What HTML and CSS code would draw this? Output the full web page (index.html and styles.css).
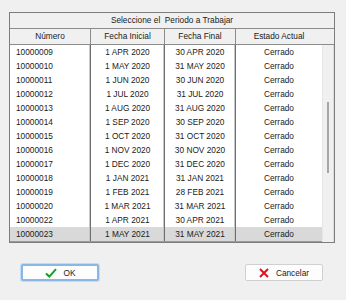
FILE: index.html
```html
<!DOCTYPE html>
<html>
<head>
<meta charset="utf-8">
<link rel="stylesheet" href="styles.css">
</head>
<body>
<div class="grid">
  <div class="title">Seleccione el&nbsp; Periodo a Trabajar</div>
  <div class="head">
    <div class="hc">Número</div>
    <div class="hc">Fecha Inicial</div>
    <div class="hc">Fecha Final</div>
    <div class="hc last">Estado Actual</div>
    <div class="hs"></div>
  </div>
  <div class="body">
    <div class="rows">
      <div class="row"><div class="c num">10000009</div><div class="c">1 APR 2020</div><div class="c">30 APR 2020</div><div class="c">Cerrado</div></div>
      <div class="row"><div class="c num">10000010</div><div class="c">1 MAY 2020</div><div class="c">31 MAY 2020</div><div class="c">Cerrado</div></div>
      <div class="row"><div class="c num">10000011</div><div class="c">1 JUN 2020</div><div class="c">30 JUN 2020</div><div class="c">Cerrado</div></div>
      <div class="row"><div class="c num">10000012</div><div class="c">1 JUL 2020</div><div class="c">31 JUL 2020</div><div class="c">Cerrado</div></div>
      <div class="row"><div class="c num">10000013</div><div class="c">1 AUG 2020</div><div class="c">31 AUG 2020</div><div class="c">Cerrado</div></div>
      <div class="row"><div class="c num">10000014</div><div class="c">1 SEP 2020</div><div class="c">30 SEP 2020</div><div class="c">Cerrado</div></div>
      <div class="row"><div class="c num">10000015</div><div class="c">1 OCT 2020</div><div class="c">31 OCT 2020</div><div class="c">Cerrado</div></div>
      <div class="row"><div class="c num">10000016</div><div class="c">1 NOV 2020</div><div class="c">30 NOV 2020</div><div class="c">Cerrado</div></div>
      <div class="row"><div class="c num">10000017</div><div class="c">1 DEC 2020</div><div class="c">31 DEC 2020</div><div class="c">Cerrado</div></div>
      <div class="row"><div class="c num">10000018</div><div class="c">1 JAN 2021</div><div class="c">31 JAN 2021</div><div class="c">Cerrado</div></div>
      <div class="row"><div class="c num">10000019</div><div class="c">1 FEB 2021</div><div class="c">28 FEB 2021</div><div class="c">Cerrado</div></div>
      <div class="row"><div class="c num">10000020</div><div class="c">1 MAR 2021</div><div class="c">31 MAR 2021</div><div class="c">Cerrado</div></div>
      <div class="row"><div class="c num">10000022</div><div class="c">1 APR 2021</div><div class="c">30 APR 2021</div><div class="c">Cerrado</div></div>
      <div class="row sel"><div class="c num">10000023</div><div class="c">1 MAY 2021</div><div class="c">31 MAY 2021</div><div class="c">Cerrado</div></div>
    </div>
    <div class="scroll"><div class="thumb"></div></div>
  </div>
</div>
<div class="actions">
  <button class="btn focus">
    <svg width="12" height="10" viewBox="0 0 12 10"><path d="M1 5.5 L4.3 8.6 L11 1.2" fill="none" stroke="#14a01e" stroke-width="2"/></svg>
    <span>OK</span>
  </button>
  <button class="btn">
    <svg width="10" height="10" viewBox="0 0 10 10"><path d="M1 1 L9 9 M9 1 L1 9" fill="none" stroke="#e0141e" stroke-width="2"/></svg>
    <span>Cancelar</span>
  </button>
</div>
</body>
</html>
```
FILE: styles.css
```css
html, body {
  margin: 0;
  padding: 0;
  background: #f0f0f0;
}
body {
  font-family: "Liberation Sans", Arial, sans-serif;
  font-size: 8.3px;
  color: #1a1a1a;
  padding: 12px 0 0 9px;
  width: 346px;
  height: 300px;
  box-sizing: border-box;
}
.grid {
  width: 326px;
  height: 231px;
  box-sizing: border-box;
  border: 1px solid #7d7d7d;
  box-shadow: inset -1px -1px 0 #9a9a9a;
  background: #fff;
  display: flex;
  flex-direction: column;
}
.title {
  height: 15px;
  line-height: 15px;
  text-align: center;
  background: #f0f0f0;
  border-bottom: 1px solid #8c8c8c;
}
.head {
  display: grid;
  grid-template-columns: 81px 74px 71px 86px 1fr;
  height: 15px;
  background: #f0f0f0;
  border-bottom: 1px solid #8c8c8c;
}
.hc {
  text-align: center;
  line-height: 15px;
  border-right: 1px solid #8c8c8c;
}
.hc.last { border-right: none; }
.body {
  flex: 1;
  display: flex;
}
.rows {
  width: 312px;
}
.row {
  display: grid;
  grid-template-columns: 81px 74px 71px 86px;
  height: 14px;
  line-height: 14px;
}
.row.sel { background: #d9d9d9; }
.c {
  text-align: center;
  border-right: 1px solid #6e6e6e;
  box-shadow: inset -1px 0 0 #c8c8c8;
}
.c:last-child { border-right: none; box-shadow: none; }
.c.num { text-align: left; padding-left: 6px; }
.scroll {
  flex: 1;
  background: #f0f0f0;
  border-left: 1px solid #e6e6e6;
  border-right: 1px solid #dcdcdc;
}
.thumb {
  width: 2px;
  height: 71px;
  margin: 57px 0 0 4px;
  background: #a6a6a6;
}
.actions {
  display: flex;
  justify-content: space-between;
  margin-top: 21px;
  padding: 0 23px 0 12px;
}
.btn {
  width: 78px;
  height: 17px;
  box-sizing: border-box;
  background: #fdfdfd;
  border: 1px solid #d0d0d0;
  border-radius: 2px;
  font-family: "Liberation Sans", Arial, sans-serif;
  font-size: 8.3px;
  color: #1a1a1a;
  display: flex;
  align-items: center;
  justify-content: center;
  gap: 7px;
  padding: 0;
}
.btn.focus {
  border: 2px solid #8ab8e6;
  box-shadow: 0 0 0 1px #c4dcf2;
}
```
